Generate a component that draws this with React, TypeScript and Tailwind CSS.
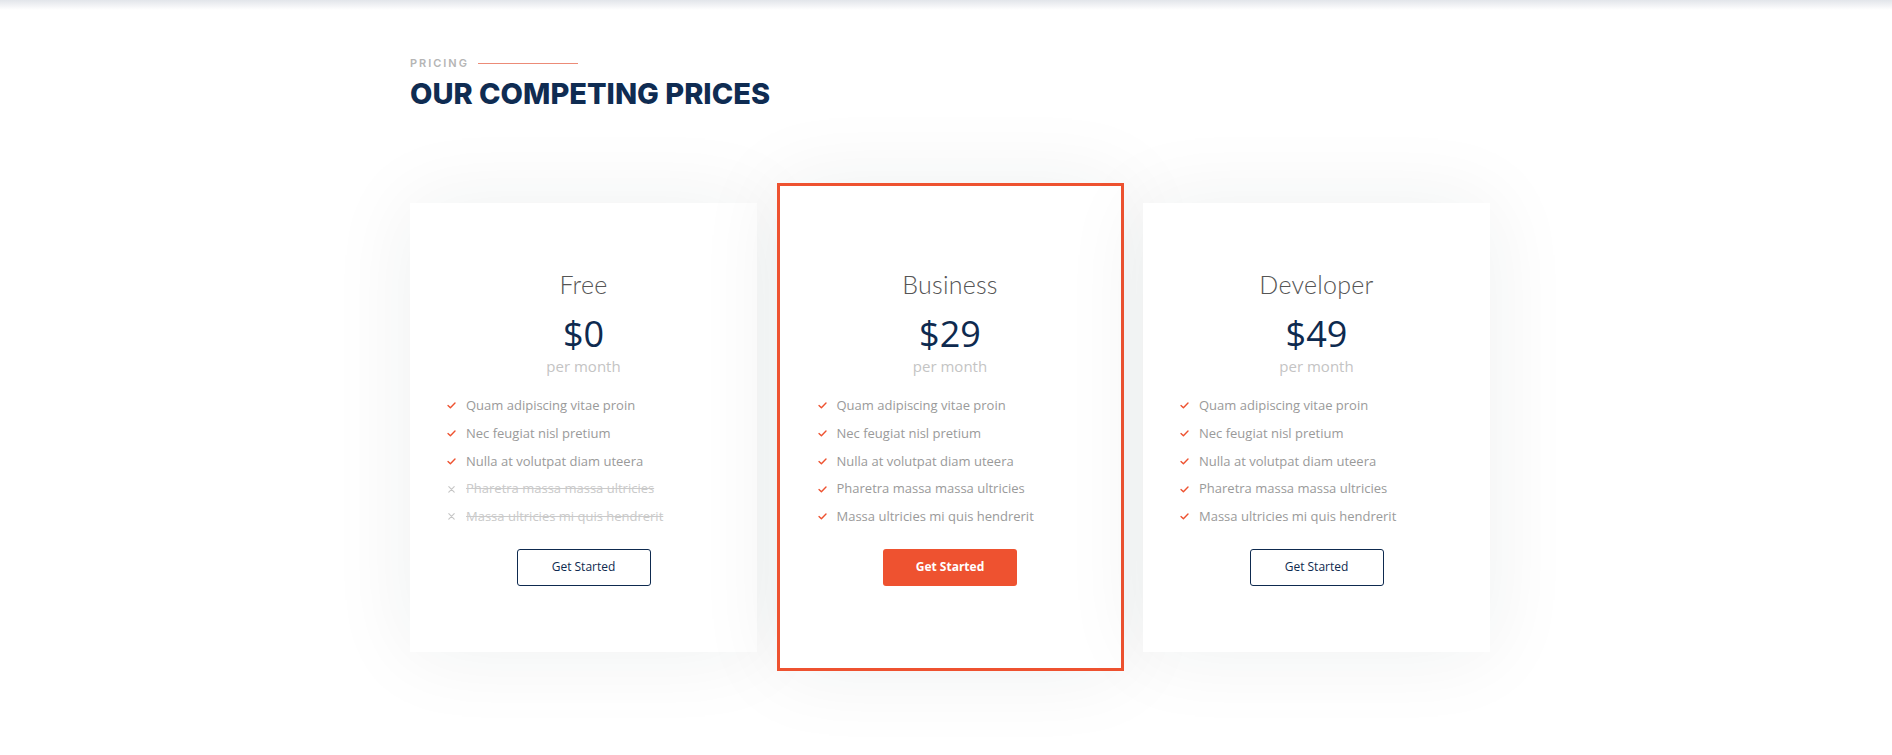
import React from 'react';

type Feature = { text: string; on: boolean };

const plans = [
    {
        name: 'Free',
        price: '$0',
        featured: false,
        features: [
            { text: 'Quam adipiscing vitae proin', on: true },
            { text: 'Nec feugiat nisl pretium', on: true },
            { text: 'Nulla at volutpat diam uteera', on: true },
            { text: 'Pharetra massa massa ultricies', on: false },
            { text: 'Massa ultricies mi quis hendrerit', on: false },
        ],
    },
    {
        name: 'Business',
        price: '$29',
        featured: true,
        features: [
            { text: 'Quam adipiscing vitae proin', on: true },
            { text: 'Nec feugiat nisl pretium', on: true },
            { text: 'Nulla at volutpat diam uteera', on: true },
            { text: 'Pharetra massa massa ultricies', on: true },
            { text: 'Massa ultricies mi quis hendrerit', on: true },
        ],
    },
    {
        name: 'Developer',
        price: '$49',
        featured: false,
        features: [
            { text: 'Quam adipiscing vitae proin', on: true },
            { text: 'Nec feugiat nisl pretium', on: true },
            { text: 'Nulla at volutpat diam uteera', on: true },
            { text: 'Pharetra massa massa ultricies', on: true },
            { text: 'Massa ultricies mi quis hendrerit', on: true },
        ],
    },
];

const Check = () => (
    <svg width="9" height="7" viewBox="0 0 9 7" fill="none" className="shrink-0">
        <path d="M1 3.6 L3.4 5.8 L8 1" stroke="#ee5230" strokeWidth="1.4" strokeLinecap="round" strokeLinejoin="round" />
    </svg>
);

const Cross = () => (
    <svg width="9" height="7" viewBox="0 0 9 7" fill="none" className="shrink-0">
        <path d="M1.8 0.6 L7.2 6.2 M7.2 0.6 L1.8 6.2" stroke="#c6c6c6" strokeWidth="1.1" strokeLinecap="round" />
    </svg>
);

const FeatureRow = ({ f }: { f: Feature }) => (
    <li className="flex items-center gap-[10px] h-[27.75px]">
        {f.on ? <Check /> : <Cross />}
        <span className={f.on ? 'text-[#9a9a9a]' : 'text-[#cacaca] line-through'}>{f.text}</span>
    </li>
);

const App = () => {
    return (
        <div className="bg-white min-h-[755px] font-['Open_Sans',sans-serif]">
            {/* header shadow strip */}
            <div className="h-[10px] bg-gradient-to-b from-[#e2e5ea] to-white"></div>

            <div className="w-[1088px] mx-auto pl-[8px] pt-[48px]">
                {/* Section title */}
                <div className="flex items-center gap-[9px]">
                    <span className="text-[11px] font-semibold tracking-[0.18em] text-[#b5b5b5] font-['Inter',sans-serif] leading-none">
                        PRICING
                    </span>
                    <span className="w-[100px] h-px bg-[#ec8b77]"></span>
                </div>
                <h2 className="mt-[8px] text-[29px] leading-[34px] font-extrabold text-[#0f2c52] font-['Inter',sans-serif]">
                    OUR COMPETING PRICES
                </h2>

                {/* Cards */}
                <div className="mt-[92px] grid grid-cols-[347px_347px_347px] gap-x-[19.5px] items-start">
                    {plans.map((p) => (
                        <div
                            key={p.name}
                            className={
                                p.featured
                                    ? 'bg-white h-[488px] -mt-[20px] pt-[17px] border-[3px] border-[#ee5230] shadow-[0_0_80px_rgba(30,40,40,0.07)]'
                                    : 'bg-white h-[449px] shadow-[0_0_80px_rgba(30,40,40,0.07)]'
                            }
                        >
                            <div className="pt-[66px] flex flex-col items-center">
                                <h3 className="text-[25px] leading-[30px] font-light text-[#555] font-['Lato',sans-serif] tracking-[0.01em]">
                                    {p.name}
                                </h3>
                                <div className="mt-[13px] text-[36px] leading-[44px] text-[#0e2a4f]">{p.price}</div>
                                <div className="text-[15px] leading-[20px] text-[#c4c4c4]">per month</div>
                            </div>
                            <ul className={p.featured ? 'mt-[16px] pl-[38px] text-[13px]' : 'mt-[16px] pl-[37px] text-[13px]'}>
                                {p.features.map((f) => (
                                    <FeatureRow key={f.text} f={f} />
                                ))}
                            </ul>
                            <div className="mt-[18px] flex justify-center">
                                {p.featured ? (
                                    <button className="w-[134px] h-[37px] rounded-[3px] bg-[#ee5230] text-white text-[12px] font-bold">
                                        Get Started
                                    </button>
                                ) : (
                                    <button className="w-[134px] h-[37px] rounded-[3px] border border-[#0e2a4f] text-[#0e2a4f] text-[12px] font-medium">
                                        Get Started
                                    </button>
                                )}
                            </div>
                        </div>
                    ))}
                </div>
            </div>
        </div>
    );
};

export default App;
